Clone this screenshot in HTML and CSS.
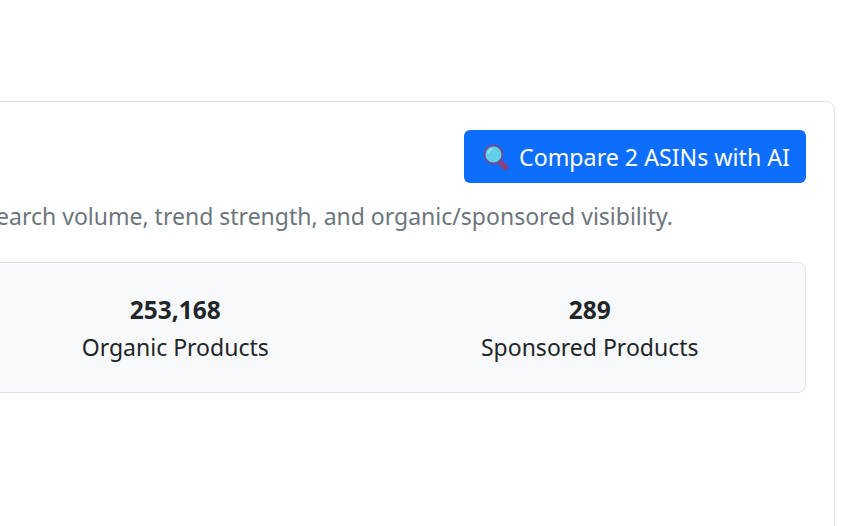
FILE: index.html
```html
<!DOCTYPE html>
<html lang="en">
<head>
<meta charset="utf-8">
<title>ASIN comparison</title>
<link rel="stylesheet" href="styles.css">
</head>
<body>
<main class="page">
  <section class="card">
    <div class="card-head">
      <button class="btn-compare" type="button">
        <svg class="icon" viewBox="0 0 28 28" width="28" height="28" aria-hidden="true">
          <path d="M17 18 L23.500 24.500" stroke="#8a3f7c" stroke-width="5.500" stroke-linecap="round"/>
          <circle cx="11.500" cy="11.500" r="9" fill="#62cfe8" stroke="#6d4a94" stroke-width="2"/>
          <path d="M6 10 A6 6 0 0 1 10 6" stroke="#a5e6f3" stroke-width="1.500" fill="none" stroke-linecap="round"/>
        </svg>
        <span>Compare 2 ASINs with AI</span>
      </button>
    </div>
    <div class="desc-row">
      <p class="desc">Compare search volume, trend strength, and organic/sponsored visibility.</p>
    </div>
    <div class="stats">
      <div class="stat">
        <strong class="stat-value">253,168</strong>
        <span class="stat-label">Organic Products</span>
      </div>
      <div class="stat">
        <strong class="stat-value">289</strong>
        <span class="stat-label">Sponsored Products</span>
      </div>
    </div>
  </section>
</main>
</body>
</html>
```
FILE: styles.css
```css
html, body {
  margin: 0;
  height: 100%;
  overflow: hidden;
  background: #fff;
}
body {
  font-family: "Noto Sans", "Open Sans", sans-serif;
  font-size: 23px;
  line-height: 36px;
  color: #212529;
}
.page {
  padding: 101px 16px 0 0;
  margin-left: -70px;
}
.card {
  box-sizing: border-box;
  height: 600px;
  padding: 28px 28px;
  background: #fff;
  border: 1px solid #dee2e6;
  border-radius: 9px;
}
.card-head {
  display: flex;
  justify-content: flex-end;
}
.btn-compare {
  display: flex;
  align-items: center;
  gap: 9px;
  box-sizing: border-box;
  width: 342px;
  height: 53px;
  padding: 0 15px 0 18px;
  font: inherit;
  font-size: 23.200px;
  color: #fff;
  white-space: nowrap;
  background: #0d6efd;
  border: 0;
  border-radius: 6px;
}
.icon {
  flex: none;
}
.desc-row {
  display: flex;
  justify-content: flex-end;
  margin: 15px 133px 0 0;
}
.desc {
  margin: 0;
  flex: none;
  color: #6c757d;
  white-space: nowrap;
}
.stats {
  display: grid;
  grid-template-columns: 1fr 1fr;
  box-sizing: border-box;
  height: 131px;
  margin-top: 28px;
  padding: 29px 8px 0;
  background: #f8f9fa;
  border: 1px solid #dee2e6;
  border-radius: 8px;
}
.stat {
  display: flex;
  flex-direction: column;
  align-items: center;
}
.stat-value {
  font-size: 24.500px;
  font-weight: 700;
  margin-bottom: 1px;
}
```
